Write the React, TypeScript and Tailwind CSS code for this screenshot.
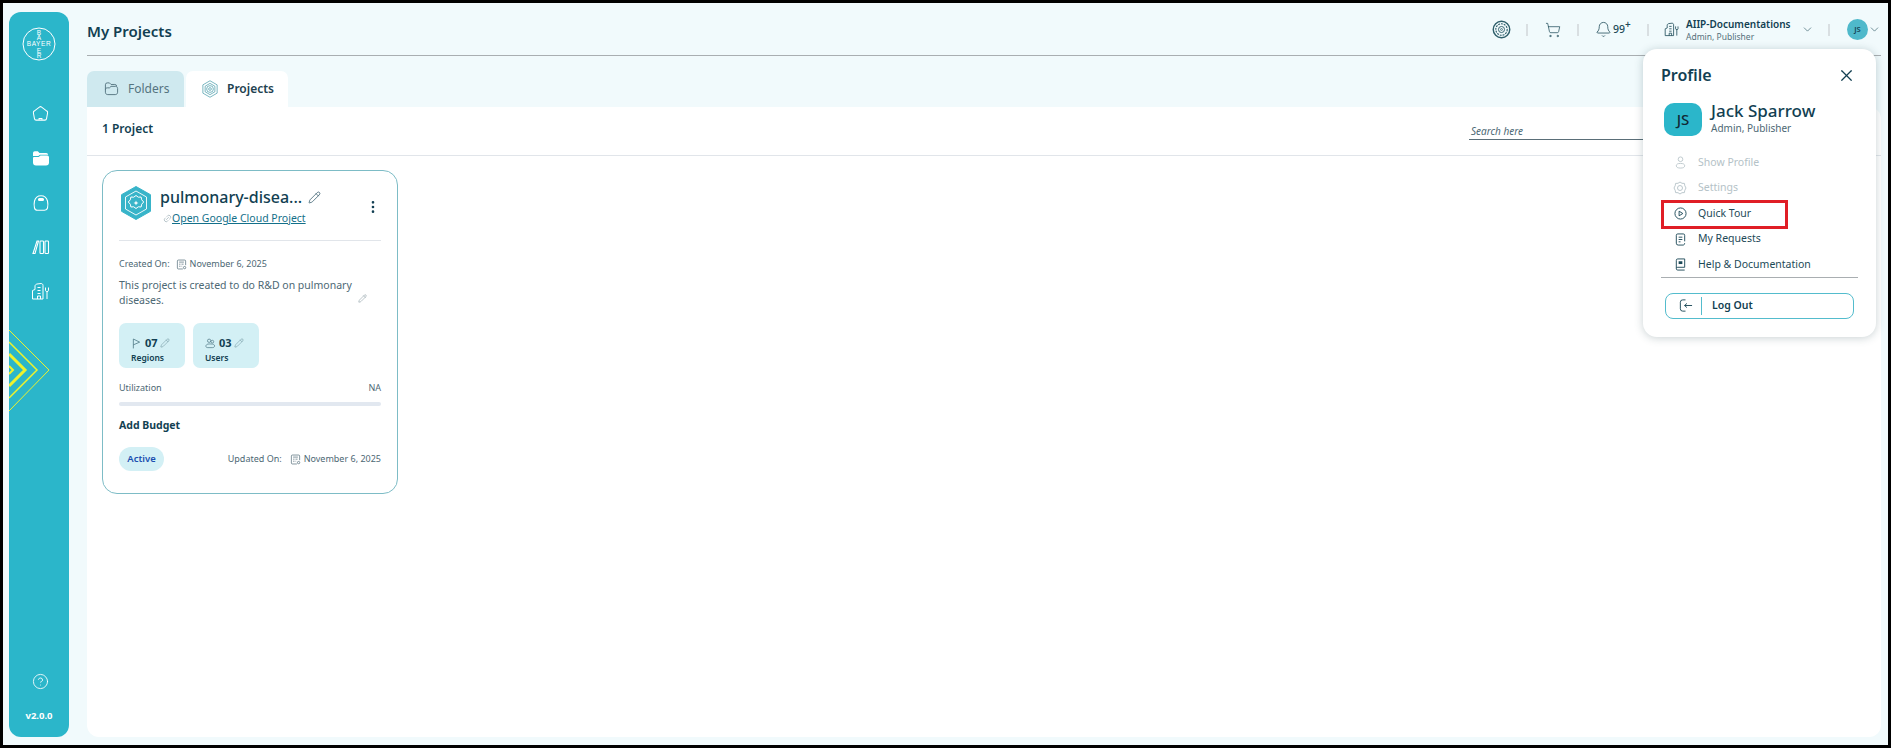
import React from 'react';
import { X, ChevronDown, Bell, ShoppingCart, Link2, Pencil, EllipsisVertical, CircleHelp } from 'lucide-react';

const font = "font-['Noto_Sans',sans-serif]";

const Hive: React.FC<{ className?: string }> = ({ className }) => (
  <svg viewBox="0 0 24 24" fill="none" stroke="currentColor" strokeWidth="1" className={className}>
    <path d="M12 1 21.500 6.500v11L12 23l-9.500-5.500v-11z" />
    <path d="M12 4.500 18.500 8.300v7.400L12 19.500l-6.500-3.800V8.300z" />
    <circle cx="12" cy="12" r="4.500" />
    <circle cx="12" cy="12" r="1.800" />
  </svg>
);

const Target: React.FC<{ className?: string }> = ({ className }) => (
  <svg viewBox="0 0 20 20" fill="none" stroke="currentColor" className={className}>
    <circle cx="10" cy="10" r="8.700" strokeWidth="1.500" />
    <circle cx="10" cy="10" r="6" strokeWidth="1.200" strokeDasharray="2 1" />
    <circle cx="10" cy="10" r="3.200" strokeWidth="1" />
    <circle cx="10" cy="10" r="1" strokeWidth="0.800" />
  </svg>
);

const Building: React.FC<{ className?: string }> = ({ className }) => (
  <svg viewBox="0 0 20 20" fill="none" stroke="currentColor" strokeWidth="1" className={className}>
    <path d="M1.500 17V8.500L4 7.500V4c0-1 1-1.800 2-2l4-.5c1.200 0 2 .8 2 2V17z" />
    <path d="M6.500 5.500h3M6.500 8.500h3M6.500 11.500h3M6.500 17v-3h3v3" />
    <path d="M16 9v8M14.500 5.500v3c0 .8.700 1 1.500 1s1.500-.2 1.500-1v-3" />
  </svg>
);

const CalendarNote: React.FC<{ className?: string }> = ({ className }) => (
  <svg viewBox="0 0 16 16" fill="none" stroke="currentColor" strokeWidth="1" className={className}>
    <path d="M14 9V3a1.500 1.500 0 0 0-1.500-1.500h-9A1.500 1.500 0 0 0 2 3v10a1.500 1.500 0 0 0 1.500 1.500H10" />
    <path d="M4.500 4.500h7M4.500 7.500h2M8 7.500h3M4.500 10.500h2M8 10.500h1" />
    <circle cx="12.500" cy="12.500" r="1.700" />
  </svg>
);

const FolderLine: React.FC<{ className?: string }> = ({ className }) => (
  <svg viewBox="0 0 16 16" fill="none" stroke="currentColor" strokeWidth="1" className={className}>
    <path d="M1.500 12V4a2 2 0 0 1 2-2h2.300l1.700 1.700h4a2 2 0 0 1 2 2" />
    <path d="M1.500 12c0 1.500 1 2.500 2.500 2.500h8c1.500 0 2.500-1 2.500-2.500V8c0-1.300-1-2.300-2.300-2.300H7.500L5.800 7.300H3.500c-1.200 0-2 .8-2 2" />
  </svg>
);

const Pennant: React.FC = () => (
  <svg viewBox="0 0 10 12" className="w-[9px] h-[11px]" fill="none" stroke="currentColor" strokeWidth="0.9">
    <path d="M1.500 11.500V1l7 3.500-7 3" />
  </svg>
);

const People: React.FC = () => (
  <svg viewBox="0 0 12 12" className="w-[11px] h-[11px]" fill="none" stroke="currentColor" strokeWidth="0.8">
    <circle cx="4.500" cy="3" r="1.800" />
    <circle cx="8" cy="4" r="1.500" />
    <path d="M1 9c0-1.500 1.200-2.500 3.500-2.500h2c2.500 0 4 .8 4 2.200 0 1-1 1.800-2.500 1.800H3C1.800 10.500 1 10 1 9z" />
  </svg>
);

const BayerLogo: React.FC = () => (
  <svg viewBox="0 0 34 34" className="w-[34px] h-[34px] text-white" fill="none">
    <circle cx="17" cy="17" r="16" stroke="currentColor" strokeWidth="1" />
    <g fill="currentColor" fontSize="6.500" fontFamily="'Liberation Sans', sans-serif" textAnchor="middle">
      <text x="17" y="7.500">B</text>
      <text x="17" y="13">A</text>
      <text x="17" y="19.400" letterSpacing="0.600">BAYER</text>
      <text x="17" y="25.500">E</text>
      <text x="17" y="31">R</text>
    </g>
  </svg>
);

const Chevrons: React.FC = () => (
  <svg viewBox="0 0 42 82" className="w-[42px] h-[82px]" fill="none" stroke="#eef22c">
    <path d="M0 0 40 40 0 81" strokeWidth="1" />
    <path d="M0 12 28 40 0 68" strokeWidth="1.500" />
    <path d="M0 24 16 40 0 56" strokeWidth="3" />
    <path d="M0 36 4 40 0 44" strokeWidth="2" />
  </svg>
);

const NavIcon: React.FC<{ children: React.ReactNode }> = ({ children }) => (
  <div className="h-[44.700px] flex items-center justify-center text-white">{children}</div>
);

const Divider: React.FC = () => <span className="block w-[2px] h-[12px] bg-[#d9dfe2]" />;

const Sidebar: React.FC = () => (
  <aside className="w-[60px] shrink-0 bg-[#2bb6ca] rounded-[12px] flex flex-col overflow-hidden relative">
    <div className="flex justify-center pt-[15px] pb-[30px]"><BayerLogo /></div>
    <div className="flex flex-col pl-[3px]">
      <NavIcon>
        <svg viewBox="0 0 18 18" className="w-[17px] h-[17px]" fill="none" stroke="white" strokeWidth="1.100">
          <path d="M7.800 2.200a2 2 0 0 1 2.400 0l5.500 4.200c.7.500 1 1.300.8 2.100l-1.100 6a1.800 1.800 0 0 1-1.800 1.500H4.400a1.800 1.800 0 0 1-1.800-1.500l-1.100-6c-.2-.8.100-1.600.8-2.100z" />
          <path d="M7.500 15.500v-1.300h3v1.300" />
        </svg>
      </NavIcon>
      <NavIcon>
        <svg viewBox="0 0 18 18" className="w-[18px] h-[18px]" fill="white">
          <path d="M1 5.500V4a1.800 1.800 0 0 1 1.800-1.800h3L7.500 4h6.700a2 2 0 0 1 2 1.700H8L6.300 7H1z" />
          <path d="M1 9a1 1 0 0 1 1-1h4.700L8.500 6.600h6.800A1.700 1.700 0 0 1 17 8.300v5.200a3 3 0 0 1-3 3H4a3 3 0 0 1-3-3z" />
        </svg>
      </NavIcon>
      <NavIcon>
        <svg viewBox="0 0 18 18" className="w-[18px] h-[18px]" fill="none" stroke="white" strokeWidth="1.100">
          <path d="M2.500 7C3.500 3 6.500 1.700 9 1.700S14.500 3 15.500 7c.6 2.500.6 4.500 0 7-.4 1.500-1.500 2.300-3 2.300h-7c-1.500 0-2.600-.8-3-2.300-.6-2.500-.6-4.500 0-7z" />
          <rect x="6.500" y="4.500" width="5" height="2" rx="1" fill="white" />
        </svg>
      </NavIcon>
      <NavIcon>
        <svg viewBox="0 0 18 18" className="w-[18px] h-[18px]" fill="none" stroke="white" strokeWidth="1.100">
          <path d="M1 15.500 5 3h1.500L3 15.500z" />
          <rect x="8" y="3" width="3.500" height="12.500" rx=".8" />
          <rect x="13" y="3" width="3.500" height="12.500" rx=".8" />
        </svg>
      </NavIcon>
      <NavIcon><Building className="w-[20px] h-[20px]" /></NavIcon>
    </div>
    <div className="absolute left-0 top-[318px]"><Chevrons /></div>
    <div className="mt-auto flex flex-col items-center pb-[14px]">
      <CircleHelp size={17} strokeWidth={1.200} className="text-white ml-[3px]" />
      <span className="mt-[19px] text-[9.500px] font-bold text-white leading-[14px]">v2.0.0</span>
    </div>
  </aside>
);

const TopBar: React.FC = () => (
  <header className="h-[44px] border-b border-[#a9aeb1] flex items-center justify-between">
    <h1 className="text-[15px] font-semibold text-[#123f52] pb-[4px]">My Projects</h1>
    <div className="flex items-center text-[#1d4a58] pb-[8px]">
      <Target className="w-[19px] h-[19px] text-[#2f5f6b]" />
      <span className="ml-[15px]"><Divider /></span>
      <ShoppingCart size={16} strokeWidth={1.100} className="ml-[17px]" />
      <span className="ml-[16px]"><Divider /></span>
      <Bell size={17} strokeWidth={1.100} className="ml-[16px]" />
      <span className="ml-[1px] w-[18px] text-[10.500px] font-medium whitespace-nowrap">99<sup className="text-[10px] font-semibold">+</sup></span>
      <span className="ml-[16px]"><Divider /></span>
      <Building className="w-[16px] h-[16px] ml-[15px]" />
      <div className="ml-[6px] w-[115px]">
        <div className="text-[10px] font-semibold text-[#123f52] leading-[14px]">AIIP-Documentations</div>
        <div className="text-[8.500px] text-[#55707b] leading-[12px]">Admin, Publisher</div>
      </div>
      <ChevronDown size={13} strokeWidth={1.100} />
      <span className="ml-[14px]"><Divider /></span>
      <span className="ml-[17px] w-[21px] h-[21px] rounded-full bg-[#4fb9cb] text-[7.500px] font-semibold text-[#123f52] flex items-center justify-center">JS</span>
      <ChevronDown size={13} strokeWidth={1.100} />
    </div>
  </header>
);

const Tabs: React.FC = () => (
  <div className="mt-[15px] flex gap-[2px] h-[36px]">
    <div className="w-[97px] h-full rounded-t-[7px] bg-[#cfe9ef] flex items-center pl-[17px] pb-[1px] text-[#557480]">
      <FolderLine className="w-[15px] h-[15px]" />
      <span className="ml-[9px] text-[12px]">Folders</span>
    </div>
    <div className="w-[102px] h-full rounded-t-[7px] bg-white flex items-center pl-[15px] pb-[1px]">
      <Hive className="w-[18px] h-[18px] text-[#4f9fac]" />
      <span className="ml-[8px] text-[12px] font-semibold text-[#22414f]">Projects</span>
    </div>
  </div>
);

const Chip: React.FC<{ icon: React.ReactNode; value: string; label: string }> = ({ icon, value, label }) => (
  <div className="w-[66px] h-[45px] rounded-[7px] bg-[#d3f0f5] pl-[12px] pt-[13px]">
    <div className="flex items-center h-[14px] text-[#4f7986]">
      <span className="w-[11px] flex justify-center">{icon}</span>
      <span className="ml-[3px] text-[11px] font-bold text-[#123f52]">{value}</span>
      <Pencil size={10} strokeWidth={1} className="ml-[2px]" />
    </div>
    <div className="mt-[1px] text-[8.500px] font-semibold text-[#123f52] leading-[14px]">{label}</div>
  </div>
);

const ProjectCard: React.FC = () => (
  <div className="w-[296px] h-[324px] border border-[#7dbcc6] rounded-[15px] bg-white px-[16px] pt-[15px]">
    <div className="flex h-[55px] border-b border-[#e1e5ea]">
      <svg viewBox="0 0 34 34" className="w-[34px] h-[34px] shrink-0" fill="none" stroke="white">
        <path d="M17 .500 31.500 8.700v16.600L17 33.500 2.500 25.300V8.700z" fill="#38b4c9" stroke="#38b4c9" strokeLinejoin="round" />
        <path d="M17 5 27.500 11v12L17 29 6.500 23V11z" strokeWidth="0.900" />
        <path d="M17 9.500l2.300 1.700 2.800-.2.600 2.800 2 2.200-2 2.200-.6 2.800-2.800-.2-2.300 1.700-2.300-1.700-2.800.2-.6-2.800-2-2.200 2-2.200.6-2.800 2.800.2z" strokeWidth="1" />
        <path d="M17 14.500l.7 1.800 1.800.7-1.800.7-.7 1.800-.7-1.800-1.800-.7 1.800-.7z" fill="white" stroke="none" />
      </svg>
      <div className="ml-[7px] flex-1 min-w-0">
        <div className="flex items-center h-[22px]">
          <span className="text-[16px] font-medium text-[#123f52] leading-[22px]">pulmonary-disea...</span>
          <Pencil size={13} strokeWidth={1.200} className="ml-[6px] text-[#123f52]" />
        </div>
        <div className="flex items-center ml-[3px] mt-[2px]">
          <Link2 size={9} strokeWidth={1} className="text-[#557480] -rotate-45" />
          <span className="text-[10.500px] text-[#13708a] underline leading-[16px]">Open Google Cloud Project</span>
        </div>
      </div>
      <EllipsisVertical size={16} strokeWidth={2} className="text-[#123f52] mt-[13px]" />
    </div>
    <div className="mt-[16px] flex items-center text-[9px] text-[#4d6874] leading-[14px]">
      <span>Created On:</span>
      <CalendarNote className="w-[11px] h-[11px] ml-[6px]" />
      <span className="ml-[3px]">November 6, 2025</span>
    </div>
    <div className="relative mt-[7px] text-[10.500px] text-[#4d6874] leading-[15px] w-[240px]">
      This project is created to do R&amp;D on pulmonary diseases.
      <Pencil size={9} strokeWidth={1} className="absolute left-[239px] top-[16px]" />
    </div>
    <div className="mt-[15px] flex gap-[8px]">
      <Chip icon={<Pennant />} value="07" label="Regions" />
      <Chip icon={<People />} value="03" label="Users" />
    </div>
    <div className="mt-[13px] flex justify-between text-[9px] text-[#4d6874] leading-[14px]">
      <span>Utilization</span><span>NA</span>
    </div>
    <div className="mt-[7px] h-[4px] rounded-full bg-[#e2e8f0]" />
    <div className="mt-[11px] text-[10.500px] font-bold text-[#123f52] leading-[16px]">Add Budget</div>
    <div className="mt-[14px] flex items-center justify-between">
      <span className="h-[24px] w-[45px] rounded-full bg-[#d3f0f5] text-[9.500px] font-semibold text-[#1b4fb0] flex items-center justify-center">Active</span>
      <div className="flex items-center text-[9px] text-[#4d6874]">
        <span>Updated On:</span>
        <CalendarNote className="w-[11px] h-[11px] ml-[8px]" />
        <span className="ml-[3px]">November 6, 2025</span>
      </div>
    </div>
  </div>
);

const ProfileRow: React.FC<{ icon: React.ReactNode; label: string; muted?: boolean }> = ({ icon, label, muted }) => (
  <div className={`flex items-center h-[25.500px] pl-[12px] ${muted ? 'text-[#b4c2c7]' : 'text-[#1d4a58]'}`}>
    <span className="w-[14px] flex justify-center">{icon}</span>
    <span className="ml-[11px] text-[10.500px]">{label}</span>
  </div>
);

const ProfileMenu: React.FC = () => (
  <div className="absolute left-[1640px] top-[46px] w-[233px] h-[288px] rounded-[14px] bg-white shadow-[0_1px_8px_rgba(40,70,80,0.25)] px-[18px] pt-[14px] z-10">
    <div className="flex items-center justify-between h-[24px]">
      <span className="text-[16px] font-semibold text-[#123f52]">Profile</span>
      <X size={19} strokeWidth={1.500} className="text-[#123f52] mr-[2px]" />
    </div>
    <div className="flex items-start mt-[16px] ml-[3px]">
      <span className="w-[38px] h-[33px] rounded-[10px] bg-[#2bb6ca] text-[15px] font-medium text-[#102a36] flex items-center justify-center">JS</span>
      <div className="ml-[9px]">
        <div className="text-[17px] font-medium text-[#123f52] leading-[16px]">Jack Sparrow</div>
        <div className="text-[10px] text-[#4d6874] leading-[18px]">Admin, Publisher</div>
      </div>
    </div>
    <div className="mt-[13px]">
      <ProfileRow muted label="Show Profile" icon={
        <svg viewBox="0 0 14 14" className="w-[13px] h-[13px]" fill="none" stroke="currentColor" strokeWidth="0.900">
          <circle cx="7" cy="3.500" r="2.500" />
          <ellipse cx="7" cy="10.500" rx="4.500" ry="2.500" />
        </svg>
      } />
      <ProfileRow muted label="Settings" icon={
        <svg viewBox="0 0 14 14" className="w-[14px] h-[14px]" fill="none" stroke="currentColor" strokeWidth="0.900">
          <path d="M7 1l2 1.300 2.400.1.400 2.300L13 7l-1.200 2.300-.4 2.300-2.400.1L7 13l-2-1.300-2.400-.1-.4-2.300L1 7l1.200-2.300.4-2.300 2.400-.1z" />
          <circle cx="7" cy="7" r="2.500" />
        </svg>
      } />
      <ProfileRow label="Quick Tour" icon={
        <svg viewBox="0 0 14 14" className="w-[13px] h-[13px]" fill="none" stroke="currentColor" strokeWidth="1">
          <circle cx="7" cy="7" r="6" />
          <path d="M5.500 4.500 9.500 7l-4 2.500z" />
        </svg>
      } />
      <ProfileRow label="My Requests" icon={
        <svg viewBox="0 0 14 14" className="w-[13px] h-[13px]" fill="none" stroke="currentColor" strokeWidth="1">
          <path d="M2.500 11V2.500A1.500 1.500 0 0 1 4 1h6a1.500 1.500 0 0 1 1.500 1.500V9" />
          <path d="M2.500 11a2 2 0 0 0 2 2h5.500a2 2 0 0 0 1.500-2" />
          <path d="M5 4.500h4M5 7h4M5 9.500h2" />
        </svg>
      } />
      <ProfileRow label="Help & Documentation" icon={
        <svg viewBox="0 0 14 14" className="w-[13px] h-[13px]" fill="none" stroke="currentColor" strokeWidth="1">
          <path d="M2.500 11V2.500A1.500 1.500 0 0 1 4 1h7.500v9H4a1.500 1.500 0 0 0-1.500 1.500A1.500 1.500 0 0 0 4 13h7.500" />
          <rect x="5" y="3.500" width="4" height="3" fill="currentColor" stroke="none" />
        </svg>
      } />
    </div>
    <div className="border-t border-[#a9aeb1] -mt-[1px]" />
    <div className="mt-[15px] mx-[4px] h-[26px] rounded-[8px] border border-[#53bccd] flex items-center pl-[12px]">
      <svg viewBox="0 0 16 16" className="w-[15px] h-[15px] text-[#1d4a58]" fill="none" stroke="currentColor" strokeWidth="1">
        <path d="M8 2H5a2.500 2.500 0 0 0-2.500 2.500v7A2.500 2.500 0 0 0 5 14h3" />
        <path d="M15 8H7M9.500 5.800 7 8l2.500 2.200" />
      </svg>
      <span className="ml-[8px] w-px h-[18px] bg-[#53bccd]" />
      <span className="ml-[10px] text-[10.500px] font-semibold text-[#123f52]">Log Out</span>
    </div>
    <div className="absolute left-[18px] top-[151px] w-[127px] h-[29px] border-[3px] border-[#e01e26]" />
  </div>
);

export default function App() {
  return (
    <div className={`${font} relative w-[1891px] h-[748px] overflow-hidden bg-[#f1fafc] border-[3px] border-black flex gap-[18px] pl-[6px] pt-[9px] pr-[7px] pb-[8px]`}>
      <Sidebar />
      <main className="flex-1 min-w-0 flex flex-col">
        <TopBar />
        <Tabs />
        <section className="flex-1 bg-white rounded-b-[12px] rounded-tr-[12px] flex flex-col">
          <div className="h-[49px] border-b border-[#e1e5ea] flex items-center justify-between pl-[15px] pr-[222px]">
            <span className="text-[12px] font-semibold text-[#123f52] pb-[4px]">1 Project</span>
            <div className="w-[190px] h-[18px] border-b border-[#5a6e78] text-[10px] italic pl-[2px] text-[#4d6874] leading-[18px]">Search here</div>
          </div>
          <div className="pl-[15px] pt-[14px]"><ProjectCard /></div>
        </section>
      </main>
      <ProfileMenu />
    </div>
  );
}
